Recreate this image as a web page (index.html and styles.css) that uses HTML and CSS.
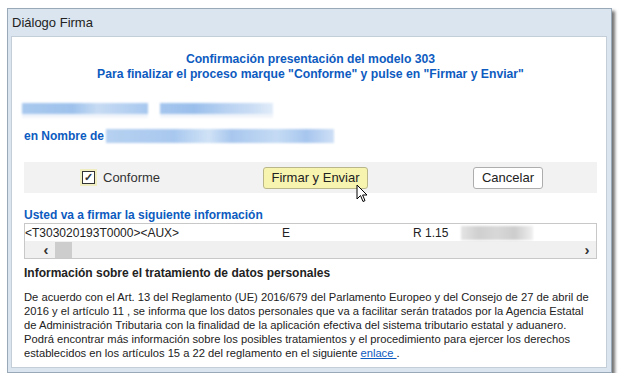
FILE: index.html
```html
<!DOCTYPE html>
<html>
<head>
  <title>Diálogo Firma</title>
  <link rel="stylesheet" href="styles.css">
</head>
<body>

  <div class="dialog">
    <div class="dialog-title">Diálogo Firma</div>

    <div class="dialog-body">
      <h3 class="heading">
        Confirmación presentación del modelo 303<br>
        Para finalizar el proceso marque "Conforme" y pulse en "Firmar y Enviar"
      </h3>

      <!-- datos ocultos -->
      <div class="blur-line">
        <span class="blur b1"></span><span class="blur b3"></span>
      </div>

      <div class="nombre">
        <span>en Nombre de</span>
        <span class="blur b4"></span>
      </div>

      <div class="actions">
        <label class="check">
          <span class="box">&#10003;</span> Conforme
        </label>
        <div class="btn-wrap">
          <button class="btn primary">Firmar y Enviar</button>
          <svg class="cursor" width="12" height="19" viewBox="0 0 12 19">
            <path d="M1 1 L1 15 L4.5 11.5 L7 17.5 L9 16.6 L6.6 11 L11 11 Z" fill="#fff" stroke="#000" stroke-width="1"/>
          </svg>
        </div>
        <button class="btn cancel">Cancelar</button>
      </div>

      <div class="section-title">Usted va a firmar la siguiente información</div>
      <div class="data-box">
        <div class="data-row">
          <span class="c1">&lt;T303020193T0000&gt;&lt;AUX&gt;</span>
          <span class="c2">E</span>
          <span class="c3">R 1.15</span>
          <span class="blur gray"></span>
        </div>
        <div class="hscroll">
          <span class="arrow">&#8249;</span>
          <span class="thumb"></span>
          <span class="track"></span>
          <span class="arrow">&#8250;</span>
        </div>
      </div>

      <div class="info-title">Información sobre el tratamiento de datos personales</div>
      <p class="info">
        De acuerdo con el Art. 13 del Reglamento (UE) 2016/679 del Parlamento Europeo y del Consejo de 27 de abril de<br>
        2016 y el artículo 11 , se informa que los datos personales que va a facilitar serán tratados por la Agencia Estatal<br>
        de Administración Tributaria con la finalidad de la aplicación efectiva del sistema tributario estatal y aduanero.<br>
        Podrá encontrar más información sobre los posibles tratamientos y el procedimiento para ejercer los derechos<br>
        establecidos en los artículos 15 a 22 del reglamento en el siguiente <a href="#">enlace </a>.
      </p>
    </div>
  </div>

</body>
</html>
```

FILE: styles.css
```css
body    { margin: 0; background: #fff; font-family: "Liberation Sans", Arial, sans-serif; color: #222; }

/* window frame */
.dialog {
  margin: 8px 0 0 7px; width: 603px; height: 363px;
  border: 1px solid #9aa9b8; background: #dae5ef;
  box-shadow: 3px 3px 3px rgba(0,0,0,.55);
  display: flex; flex-direction: column;
}
.dialog-title { height: 27px; line-height: 28px; padding-left: 4px; font-size: 13px; color: #222; }
.dialog-body  {
  flex: 1; margin: 0 4px 4px 3px; background: #fff;
  border: 1px solid #c3ced9; padding: 0 9px 0 12px;
}

.heading { margin: 15px 0 0; text-align: center; font-size: 12.2px; line-height: 15px; color: #0d5bc0; }

/* blurred personal data */
.blur       { display: inline-block; height: 11px; filter: blur(1.2px); }
.blur-line  { margin-top: 21px; height: 16px; display: flex; gap: 12px; margin-left: -2px; }
.b1 { width: 126px; border-bottom: 4px solid #f1f5fb; background: linear-gradient(90deg,#a9c9ee,#9ec2ec 40%,#c7dbf3 60%,#a8c8ef); }
.b3 { width: 113px; border-bottom: 4px solid #f1f5fb; background: linear-gradient(90deg,#a5c6ee,#9abfeb 30%,#bad3f2 60%,#c9dcf4 80%,#e1ecf9); }
.nombre     { margin-top: 10px; display: flex; align-items: center; font-size: 12px; font-weight: bold; color: #0d5bc0; }
.b4 { width: 228px; height: 14px; margin-left: 2px; background: linear-gradient(90deg,#b6d1f1,#a9c8ef 30%,#d0e2f6 45%,#a8c7ee 55%,#c5dbf4 75%,#a7c6ee 88%,#cfe0f6); }

/* action bar */
.actions {
  margin-top: 19px; height: 31px; background: #f2f2f2;
  display: flex; align-items: center;
}
.check  { margin-left: 58px; width: 181px; display: flex; align-items: center; gap: 8px; font-size: 13px; color: #333; }
.box    {
  width: 11px; height: 11px; border: 1px solid #333; background: #fff;
  box-shadow: 0 0 0 2px #f0eec0;
  font-size: 11px; line-height: 11px; text-align: center; font-weight: bold;
}
.btn-wrap { position: relative; }
.btn {
  font-family: "Liberation Sans", Arial, sans-serif; font-size: 13px; color: #222;
  height: 22px; padding: 0; border: 1px solid #adadad; border-radius: 3px;
  background: #fff; white-space: nowrap;
}
.btn.primary { width: 105px; background: #f7f4b0; border-color: #b9b78a; }
.btn.cancel  { margin-left: 105px; width: 70px; }
.cursor { position: absolute; left: 93px; top: 17px; }

/* data to sign */
.section-title { margin-top: 15px; font-size: 12px; font-weight: bold; color: #0d5bc0; }
.data-box  { margin-top: 1px; border: 1px solid #c8c8c8; }
.data-row  { height: 17px; display: flex; align-items: center; font-size: 12px; color: #222; white-space: nowrap; }
.c1 { width: 257px; }
.c2 { width: 131px; }
.c3 { width: 48px; }
.gray { width: 72px; height: 14px; background: linear-gradient(90deg,#e4e4e4,#cfcfcf 25%,#d8d8d8 50%,#cdcdcd 75%,#f0f0f0); filter: blur(1px); }
.hscroll { height: 17px; background: #f0f0f0; display: flex; align-items: center; font-size: 15px; font-weight: bold; color: #333; }
.hscroll .arrow { width: 18px; text-align: center; line-height: 17px; }
.hscroll .arrow:first-child { margin-left: 12px; }
.thumb { width: 17px; height: 16px; background: #cdcdcd; }
.track { flex: 1; }

/* privacy info */
.info-title { margin-top: 7px; font-size: 12px; font-weight: bold; color: #222; }
.info       { margin: 10px 0 0; font-size: 11.2px; line-height: 14px; color: #222; white-space: nowrap; }
.info a     { color: #0d5bc0; }
```
